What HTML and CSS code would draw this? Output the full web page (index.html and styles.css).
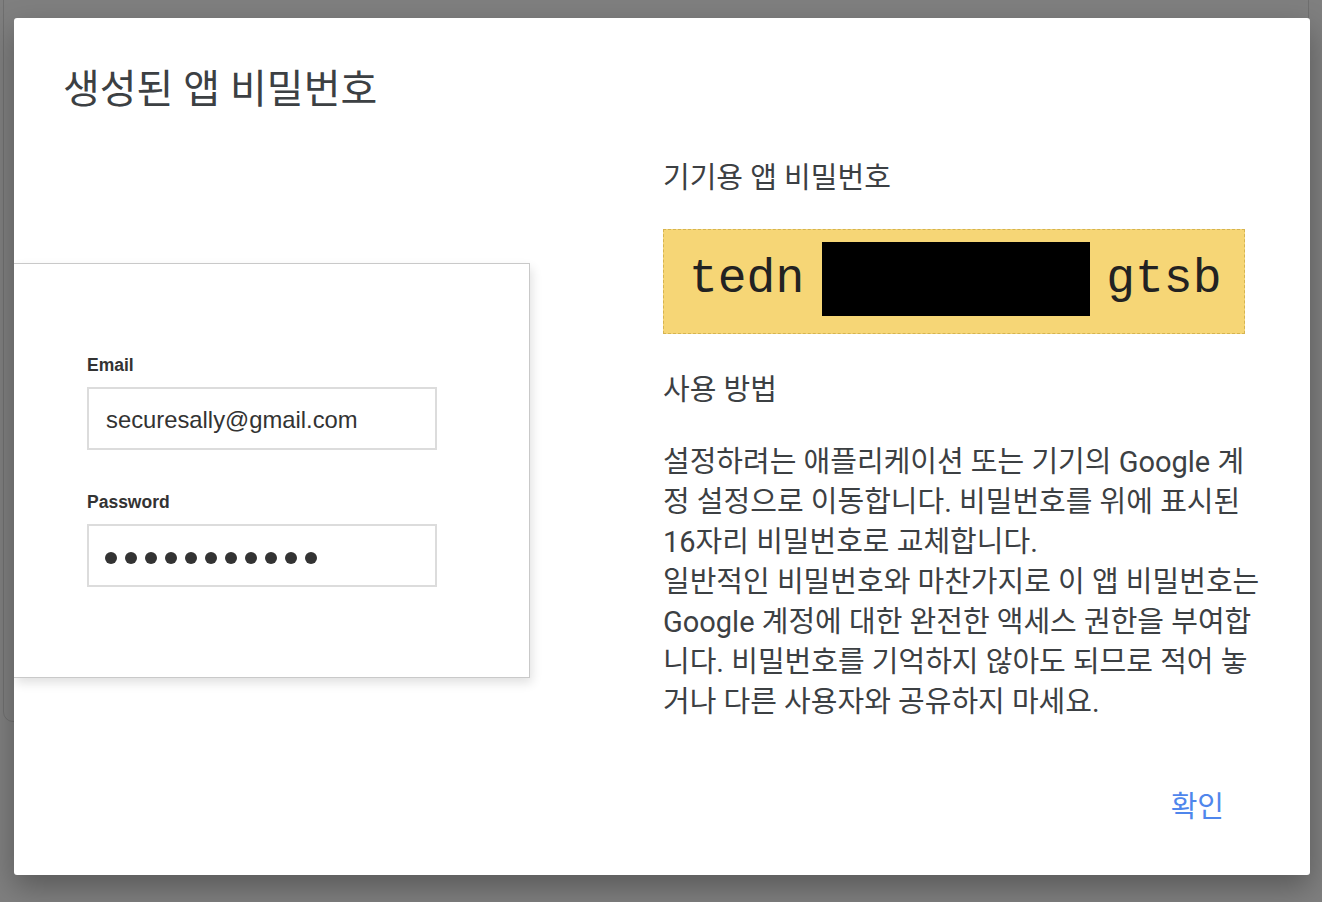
FILE: index.html
```html
<!DOCTYPE html>
<html lang="ko">
<head>
<meta charset="utf-8">
<title>생성된 앱 비밀번호</title>
<link rel="stylesheet" href="styles.css">
</head>
<body>
<div class="backdrop-card"></div>
<div class="dialog">
  <h1 class="title">생성된 앱 비밀번호</h1>
  <div class="content">
    <div class="left">
      <div class="signin-card">
        <div class="field">
          <div class="label">Email</div>
          <div class="input">securesally@gmail.com</div>
        </div>
        <div class="field">
          <div class="label">Password</div>
          <div class="input dots">
            <span class="dot"></span><span class="dot"></span><span class="dot"></span><span class="dot"></span><span class="dot"></span><span class="dot"></span><span class="dot"></span><span class="dot"></span><span class="dot"></span><span class="dot"></span><span class="dot"></span>
          </div>
        </div>
      </div>
    </div>
    <div class="right">
      <h2 class="subhead">기기용 앱 비밀번호</h2>
      <div class="pw-box">
        <span class="pw-part">tedn</span>
        <span class="redact"></span>
        <span class="pw-part">gtsb</span>
      </div>
      <h2 class="subhead how">사용 방법</h2>
      <p class="body-text">
        <span class="line">설정하려는 애플리케이션 또는 기기의 Google 계</span>
        <span class="line">정 설정으로 이동합니다. 비밀번호를 위에 표시된</span>
        <span class="line">16자리 비밀번호로 교체합니다.</span>
        <span class="line">일반적인 비밀번호와 마찬가지로 이 앱 비밀번호는</span>
        <span class="line">Google 계정에 대한 완전한 액세스 권한을 부여합</span>
        <span class="line">니다. 비밀번호를 기억하지 않아도 되므로 적어 놓</span>
        <span class="line">거나 다른 사용자와 공유하지 마세요.</span>
      </p>
    </div>
  </div>
  <div class="actions">
    <button class="ok">확인</button>
  </div>
</div>
</body>
</html>
```
FILE: styles.css
```css
html, body {
  margin: 0;
  padding: 0;
}
body {
  background: #7f7f7f;
  width: 1322px;
  height: 902px;
  overflow: hidden;
  position: relative;
  padding: 18px 12px 0 14px;
  box-sizing: border-box;
  font-family: Roboto, "Noto Sans CJK KR", sans-serif;
}
.backdrop-card {
  position: absolute;
  left: 3px;
  top: -20px;
  width: 1306px;
  height: 742px;
  border: 1px solid rgba(0, 0, 0, 0.12);
  border-radius: 10px;
  box-sizing: border-box;
}
.dialog {
  position: relative;
  width: 1296px;
  height: 857px;
  background: #fff;
  border-radius: 3px;
  box-shadow: 0 12px 30px rgba(0, 0, 0, 0.3);
  overflow: hidden;
  display: flex;
  flex-direction: column;
}
.title {
  margin: 0;
  padding: 48px 0 0 49px;
  font-size: 40px;
  line-height: 48px;
  font-weight: 400;
  color: #3c4043;
}
.content {
  display: flex;
  margin-top: 46px;
}
.left {
  width: 516px;
  padding-top: 103px;
}
.signin-card {
  width: 516px;
  height: 415px;
  box-sizing: border-box;
  border: 1px solid #c9c9c9;
  border-left: none;
  box-shadow: 2px 5px 10px rgba(0, 0, 0, 0.12);
  padding: 91px 0 0 73px;
  font-family: "Liberation Sans", Arial, sans-serif;
}
.field + .field {
  margin-top: 42px;
}
.label {
  font-size: 17.5px;
  font-weight: 700;
  color: #333;
  line-height: 20px;
  margin-bottom: 12px;
}
.input {
  width: 350px;
  height: 63px;
  box-sizing: border-box;
  border: 2px solid #dcdcdc;
  padding: 3px 0 0 17px;
  display: flex;
  align-items: center;
  font-size: 23.8px;
  color: #333;
}
.dots {
  gap: 8px;
  padding: 5px 0 0 16px;
}
.dot {
  width: 12px;
  height: 12px;
  border-radius: 50%;
  background: #333;
}
.right {
  margin-left: 133px;
  width: 600px;
}
.subhead {
  margin: 0;
  font-size: 29px;
  line-height: 36px;
  font-weight: 400;
  color: #3c4043;
}
.pw-box {
  margin-top: 33px;
  width: 582px;
  height: 105px;
  box-sizing: border-box;
  background: #f6d676;
  border: 1px dashed #d6b451;
  display: flex;
  align-items: flex-start;
  padding: 12px 0 0 25px;
}
.pw-part {
  font-family: "Courier New", "Liberation Mono", monospace;
  font-size: 48px;
  line-height: 74px;
  height: 74px;
  color: #222;
}
.redact {
  width: 268px;
  height: 74px;
  background: #000;
  margin: 0 16px 0 18px;
}
.how {
  margin-top: 38px;
}
.body-text {
  margin: 34px 0 0;
  font-size: 29px;
  line-height: 40px;
  color: #3c4043;
}
.line {
  display: block;
  white-space: nowrap;
}
.actions {
  display: flex;
  justify-content: flex-end;
  padding: 67px 86px 0 0;
}
.ok {
  border: none;
  background: none;
  padding: 0;
  font-family: Roboto, "Noto Sans CJK KR", sans-serif;
  font-size: 29px;
  line-height: 36px;
  color: #4f86ec;
  cursor: pointer;
}
```
